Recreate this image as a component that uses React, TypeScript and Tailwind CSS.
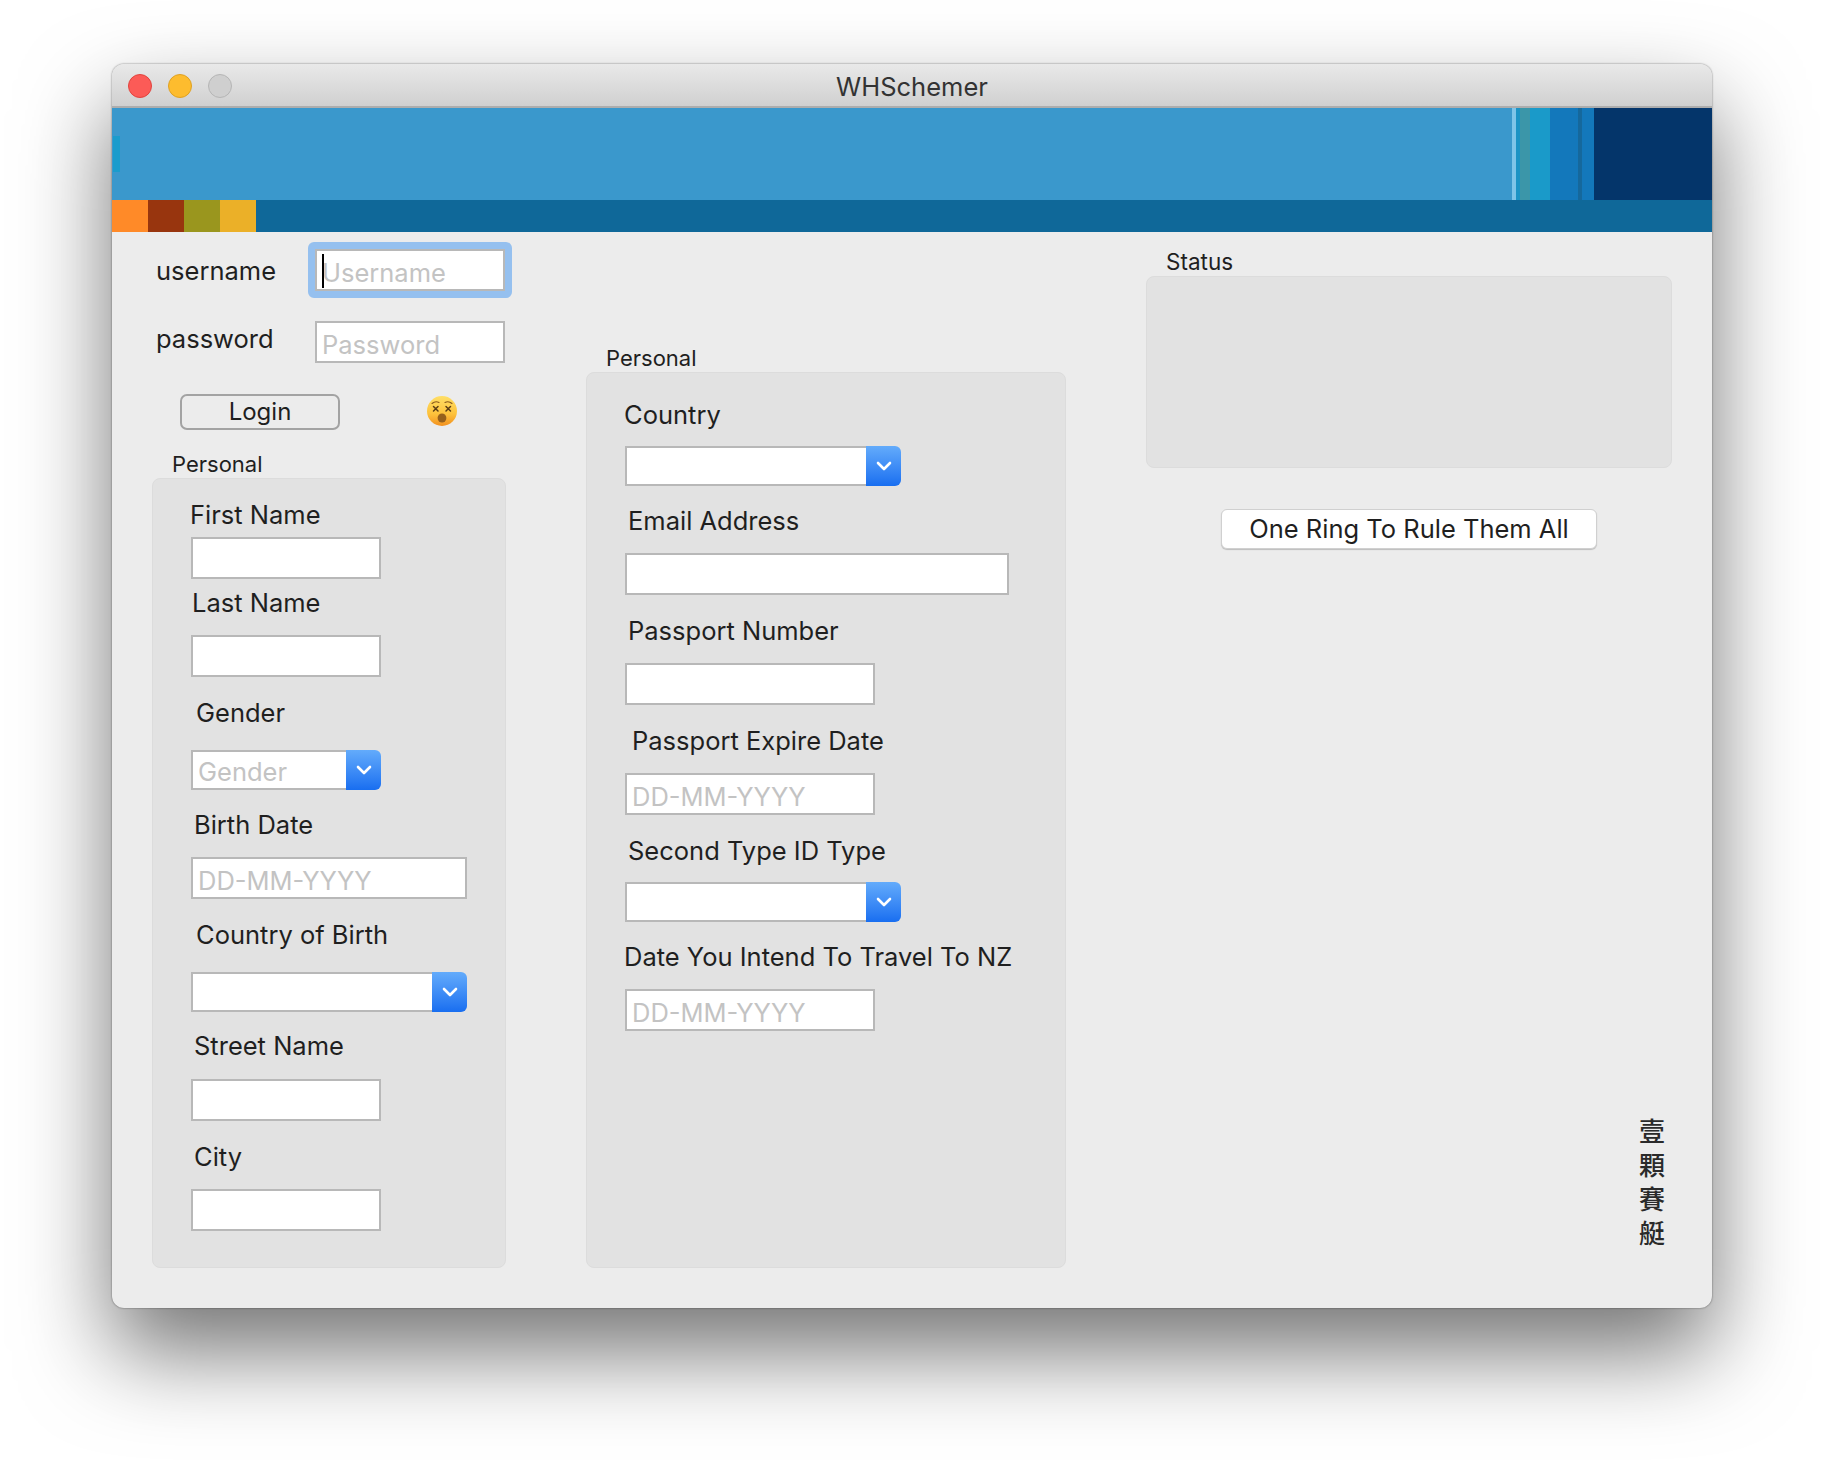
const FONT = "font-['Inter','Liberation_Sans',sans-serif]"

function Label({ className, children }: { className: string; children: React.ReactNode }) {
  return <div className={`h-[32px] leading-[32px] text-[25.5px] text-[#1f1f1f] whitespace-nowrap ${className}`}>{children}</div>
}

function Input({ className, placeholder }: { className: string; placeholder?: string }) {
  return (
    <input
      readOnly
      placeholder={placeholder}
      className={`block h-[42px] border-2 border-[#b8b8b8] bg-white pl-[5px] pr-[6px] pt-[4px] text-[25.5px] outline-none placeholder:text-[#c3c3c3] ${className}`}
    />
  )
}

function Select({ className, placeholder }: { className: string; placeholder?: string }) {
  return (
    <div className={`flex h-[40px] ${className}`}>
      <div className="flex-1 border-2 border-r-0 border-[#b8b8b8] bg-white pl-[5px] text-[25.5px] leading-[40px] text-[#c3c3c3]">{placeholder}</div>
      <div className="flex w-[35px] items-center justify-center rounded-r-[6px] bg-gradient-to-b from-[#63abfb] to-[#186ef0]">
        <svg width="16" height="10" viewBox="0 0 16 10" fill="none">
          <path d="M2 2l6 6 6-6" stroke="#fff" strokeWidth="2.6" strokeLinecap="round" strokeLinejoin="round" />
        </svg>
      </div>
    </div>
  )
}

function DizzyFace() {
  return (
    <svg width="32" height="32" viewBox="0 0 32 32">
      <defs>
        <linearGradient id="face" x1="0" y1="0" x2="0" y2="1">
          <stop offset="0%" stopColor="#ffdf66" />
          <stop offset="60%" stopColor="#fdc23c" />
          <stop offset="100%" stopColor="#f2901f" />
        </linearGradient>
      </defs>
      <circle cx="16" cy="16" r="15" fill="url(#face)" />
      <path d="M6 8.5q3.5-3 7-1M19 7.5q3.5-2 7 1" stroke="#8a5a1c" strokeWidth="1.1" fill="none" strokeLinecap="round" />
      <path d="M7.5 11.5l4.5 4.5M12 11.5l-4.5 4.5M20 11.5l4.5 4.5M24.5 11.5l-4.5 4.5" stroke="#5a3d14" strokeWidth="1.5" strokeLinecap="round" />
      <ellipse cx="16" cy="23" rx="4.4" ry="4.6" fill="#96601c" />
    </svg>
  )
}

export default function App() {
  return (
    <div className={`min-h-[1468px] overflow-hidden bg-white pl-[112px] pt-[64px] ${FONT}`}>
      <div className="h-[1244px] w-[1600px] overflow-hidden rounded-[12px] bg-[#ececec] shadow-[0_0_2px_rgba(0,0,0,0.55),0_44px_90px_rgba(0,0,0,0.55)]">
        {/* title bar */}
        <div className="relative flex h-[44px] items-center justify-center border-b-2 border-[#adadad] bg-gradient-to-b from-[#e9e9e9] to-[#d0d0d0] pt-[4px]">
          <div className="absolute left-[16px] top-[10px] flex gap-[16px]">
            <div className="h-[24px] w-[24px] rounded-full border border-[#e0443e] bg-[#fc5b57]" />
            <div className="h-[24px] w-[24px] rounded-full border border-[#dea123] bg-[#fdbc2e]" />
            <div className="h-[24px] w-[24px] rounded-full border border-[#b5b5b5] bg-[#cfcfcf]" />
          </div>
          <span className="text-[25.5px] text-[#333333]">WHSchemer</span>
        </div>

        {/* banner */}
        <div className="flex h-[92px] bg-[#3a98cc]">
          <div className="ml-[1px] mt-[28px] h-[36px] w-[7px] bg-[#1b9ccc]" />
          <div className="ml-auto w-[4px] bg-[#7fc4e8]" />
          <div className="w-[4px] bg-[#1c93c4]" />
          <div className="w-[10px] bg-[#3b96a9]" />
          <div className="w-[20px] bg-[#1a9ac9]" />
          <div className="w-[28px] bg-[#1378bb]" />
          <div className="w-[4px] bg-[#15689c]" />
          <div className="w-[12px] bg-[#1378bb]" />
          <div className="w-[118px] bg-[#04356a]" />
        </div>
        <div className="flex h-[32px] bg-[#0f6899]">
          <div className="w-[36px] bg-[#ff8a28]" />
          <div className="w-[36px] bg-[#98350e]" />
          <div className="w-[36px] bg-[#9a961e]" />
          <div className="w-[36px] bg-[#ebb028]" />
        </div>

        {/* content */}
        <div className="flex h-[1076px] pl-[40px] pr-[40px]">
          {/* left column */}
          <div className="flex w-[354px] flex-col">
            <div className="mt-[10px] flex items-start">
              <Label className="ml-[4px] mt-[13px] w-[152px] shrink-0">username</Label>
              <div className="relative shrink-0 rounded-[6px] bg-[#95c0ef] p-[7px]">
                <Input className="w-[190px]" placeholder="Username" />
                <div className="absolute left-[14px] top-[12px] h-[34px] w-[2px] bg-black" />
              </div>
            </div>
            <div className="mt-[23px] flex items-start">
              <Label className="ml-[4px] mt-[2px] w-[159px] shrink-0">password</Label>
              <Input className="w-[190px]" placeholder="Password" />
            </div>
            <div className="mt-[31px] flex items-center">
              <div className="ml-[28px] flex h-[36px] w-[160px] items-center justify-center rounded-[7px] border-2 border-[#a3a3a3] text-[24px] text-[#1f1f1f]">Login</div>
              <div className="-mt-[2px] ml-[86px]"><DizzyFace /></div>
            </div>
            <div className="ml-[20px] mt-[20px] h-[28px] text-[22px] leading-[28px] text-[#1f1f1f]">Personal</div>
            <div className="h-[790px] rounded-[8px] border border-[#dcdcdc] bg-[#e2e2e2] pt-[20px]">
              <Label className="ml-[37px]">First Name</Label>
              <Input className="ml-[38px] mt-[6px] w-[190px]" />
              <Label className="ml-[39px] mt-[8px]">Last Name</Label>
              <Input className="ml-[38px] mt-[16px] w-[190px]" />
              <Label className="ml-[43px] mt-[20px]">Gender</Label>
              <Select className="ml-[38px] mt-[21px] w-[190px]" placeholder="Gender" />
              <Label className="ml-[41px] mt-[19px]">Birth Date</Label>
              <Input className="ml-[38px] mt-[16px] w-[276px]" placeholder="DD-MM-YYYY" />
              <Label className="ml-[43px] mt-[20px]">Country of Birth</Label>
              <Select className="ml-[38px] mt-[21px] w-[276px]" />
              <Label className="ml-[41px] mt-[18px]">Street Name</Label>
              <Input className="ml-[38px] mt-[17px] w-[190px]" />
              <Label className="ml-[41px] mt-[20px]">City</Label>
              <Input className="ml-[38px] mt-[16px] w-[190px]" />
            </div>
          </div>

          {/* middle column */}
          <div className="ml-[80px] flex w-[480px] flex-col">
            <div className="ml-[20px] mt-[112px] h-[28px] text-[22px] leading-[28px] text-[#1f1f1f]">Personal</div>
            <div className="h-[896px] rounded-[8px] border border-[#dcdcdc] bg-[#e2e2e2] pt-[26px]">
              <Label className="ml-[37px]">Country</Label>
              <Select className="ml-[38px] mt-[15px] w-[276px]" />
              <Label className="ml-[41px] mt-[19px]">Email Address</Label>
              <Input className="ml-[38px] mt-[16px] w-[384px]" />
              <Label className="ml-[41px] mt-[20px]">Passport Number</Label>
              <Input className="ml-[38px] mt-[16px] w-[250px]" />
              <Label className="ml-[45px] mt-[20px]">Passport Expire Date</Label>
              <Input className="ml-[38px] mt-[16px] w-[250px]" placeholder="DD-MM-YYYY" />
              <Label className="ml-[41px] mt-[20px]">Second Type ID Type</Label>
              <Select className="ml-[38px] mt-[15px] w-[276px]" />
              <Label className="ml-[37px] mt-[19px]">Date You Intend To Travel To NZ</Label>
              <Input className="ml-[38px] mt-[16px] w-[250px]" placeholder="DD-MM-YYYY" />
            </div>
          </div>

          {/* right column */}
          <div className="ml-[80px] flex w-[526px] flex-col">
            <div className="ml-[20px] mt-[16px] h-[28px] text-[22.5px] leading-[28px] text-[#1f1f1f]">Status</div>
            <div className="h-[192px] rounded-[8px] border border-[#dcdcdc] bg-[#e2e2e2]" />
            <div className="mx-auto mt-[41px] flex h-[40px] w-[376px] items-center justify-center rounded-[6px] border border-[#d0d0d0] bg-white text-[25.5px] text-[#1f1f1f] shadow-[0_1px_1px_rgba(0,0,0,0.2)]">
              One Ring To Rule Them All
            </div>
            <div className="mb-[59px] mr-[7px] mt-auto w-[26px] self-end font-['Noto_Sans_CJK_TC',sans-serif] text-[26px] font-medium leading-[34px] text-[#2a2a2a]">
              <div>壹</div>
              <div>顆</div>
              <div>賽</div>
              <div>艇</div>
            </div>
          </div>
        </div>
      </div>
    </div>
  )
}
